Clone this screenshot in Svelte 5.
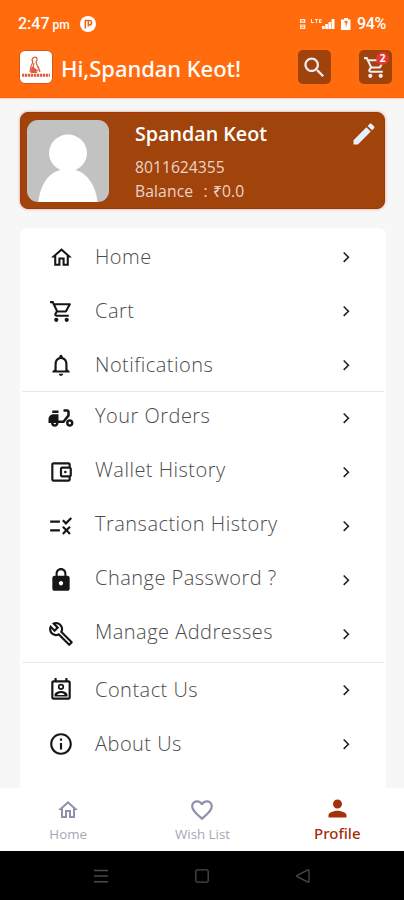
<script>
  const icons = {
    home: 'M12 5.69l5 4.5V18h-2v-6H9v6H7v-7.81l5-4.5M12 3L2 12h3v8h6v-6h2v6h6v-8h3L12 3z',
    cart: 'M15.55 13c.75 0 1.41-.41 1.75-1.03l3.58-6.49A.996.996 0 0 0 20.01 4H5.21l-.94-2H1v2h2l3.6 7.59-1.35 2.44C4.52 15.37 5.48 17 7 17h12v-2H7l1.1-2h7.45zM6.16 6h12.15l-2.76 5H8.53L6.16 6zM7 18c-1.1 0-1.99.9-1.99 2S5.9 22 7 22s2-.9 2-2-.9-2-2-2zm10 0c-1.1 0-1.99.9-1.99 2s.89 2 1.99 2 2-.9 2-2-.9-2-2-2z',
    bell: 'M12 22c1.1 0 2-.9 2-2h-4c0 1.1.9 2 2 2zm6-6v-5c0-3.07-1.63-5.64-4.5-6.32V4c0-.83-.67-1.5-1.5-1.5s-1.5.67-1.5 1.5v.68C7.64 5.36 6 7.92 6 11v5l-2 2v1h16v-1l-2-2zm-2 1H8v-6c0-2.48 1.51-4.5 4-4.5s4 2.02 4 4.5v6z',
    scooter: 'M19 7c0-1.1-.9-2-2-2h-3v2h3v2.65L13.52 14H10V9H6c-2.21 0-4 1.79-4 4v3h2c0 1.66 1.34 3 3 3s3-1.34 3-3h4.48L19 10.35V7zM7 17c-.55 0-1-.45-1-1h2c0 .55-.45 1-1 1zM5 6h5v2H5zM19 13c-1.66 0-3 1.34-3 3s1.34 3 3 3 3-1.34 3-3-1.34-3-3-3zm0 4c-.55 0-1-.45-1-1s.45-1 1-1 1 .45 1 1-.45 1-1 1z',
    wallet: 'M21 7.28V5c0-1.1-.9-2-2-2H5c-1.11 0-2 .9-2 2v14c0 1.1.89 2 2 2h14c1.1 0 2-.9 2-2v-2.28c.59-.35 1-.98 1-1.72V9c0-.74-.41-1.37-1-1.72zM20 9v6h-7V9h7zM5 19V5h14v2h-6c-1.1 0-2 .9-2 2v6c0 1.1.9 2 2 2h6v2H5zM16 10.8a1.2 1.2 0 1 0 0 2.4a1.2 1.2 0 1 0 0-2.4z',
    rule: 'M16.54 11L13 7.46l1.41-1.41 2.12 2.12 4.24-4.24 1.41 1.41L16.54 11zM11 7H2v2h9V7zm10 6.41L19.59 12 17 14.59 14.41 12 13 13.41 15.59 16 13 18.59 14.41 20 17 17.41 19.59 20 21 18.59 18.41 16 21 13.41zM11 15H2v2h9v-2z',
    lock: 'M18 8h-1V6c0-2.76-2.24-5-5-5S7 3.24 7 6v2H6c-1.1 0-2 .9-2 2v10c0 1.1.9 2 2 2h12c1.1 0 2-.9 2-2V10c0-1.1-.9-2-2-2zm-6 9c-1.1 0-2-.9-2-2s.9-2 2-2 2 .9 2 2-.9 2-2 2zm3.1-9H8.9V6c0-1.71 1.39-3.1 3.1-3.1 1.71 0 3.1 1.39 3.1 3.1v2z',
    wrench: 'M22.61 18.99l-9.08-9.08c.93-2.34.45-5.1-1.44-7C9.79.61 6.21.4 3.66 2.26L7.5 6.11 6.08 7.52 2.25 3.69C.39 6.23.6 9.82 2.9 12.11c1.86 1.86 4.57 2.35 6.89 1.48l9.11 9.11c.39.39 1.02.39 1.41 0l2.3-2.3c.4-.38.4-1.01 0-1.41zm-3 1.6l-9.46-9.46c-.61.45-1.29.72-2 .82-1.36.2-2.79-.21-3.83-1.25C3.37 9.76 2.93 8.5 3 7.26l3.09 3.09 4.24-4.24-3.09-3.09c1.24-.07 2.49.37 3.44 1.31 1.08 1.08 1.49 2.57 1.24 3.96-.12.71-.42 1.37-.88 1.96l9.45 9.45-.88.89z',
    contact: 'M19 3h-1V1h-2v2H8V1H6v2H5c-1.11 0-2 .9-2 2v14c0 1.1.89 2 2 2h14c1.1 0 2-.9 2-2V5c0-1.1-.9-2-2-2zm0 16H5V5h14v14zM12 6.2a2.9 2.9 0 1 0 0 5.8a2.9 2.9 0 1 0 0-5.8zm0 1.6a1.3 1.3 0 1 1 0 2.6a1.3 1.3 0 1 1 0-2.6zM6 16.6V18h12v-1.4c0-2.4-3.8-3.7-6-3.7s-6 1.3-6 3.7zm2.5-.1c.7-.9 2.2-1.7 3.5-1.7s2.8.8 3.5 1.7z',
    info: 'M11 7h2v2h-2V7zm0 4h2v6h-2v-6zm1-9C6.48 2 2 6.48 2 12s4.48 10 10 10 10-4.48 10-10S17.52 2 12 2zm0 18c-4.41 0-8-3.59-8-8s3.59-8 8-8 8 3.59 8 8-3.59 8-8 8z',
    heart: 'M16.5 3c-1.74 0-3.41.81-4.5 2.09C10.91 3.81 9.24 3 7.5 3 4.42 3 2 5.42 2 8.5c0 3.78 3.4 6.86 8.55 11.54L12 21.35l1.45-1.32C18.6 15.36 22 12.28 22 8.5 22 5.42 19.58 3 16.5 3zm-4.4 15.55l-.1.1-.1-.1C7.14 14.24 4 11.39 4 8.5 4 6.5 5.5 5 7.5 5c1.54 0 3.04.99 3.57 2.36h1.87C13.46 5.99 14.96 5 16.5 5c2 0 3.5 1.5 3.5 3.5 0 2.89-3.14 5.74-7.9 10.05z',
    person: 'M12 12c2.21 0 4-1.79 4-4s-1.79-4-4-4-4 1.79-4 4 1.79 4 4 4zm0 2c-2.67 0-8 1.34-8 4v2h16v-2c0-2.66-5.33-4-8-4z',
    search: 'M15.5 14h-.79l-.28-.27C15.41 12.59 16 11.11 16 9.5 16 5.91 13.09 3 9.5 3S3 5.91 3 9.5 5.91 16 9.5 16c1.61 0 3.09-.59 4.23-1.57l.27.28v.79l5 4.99L20.49 19l-4.99-5zm-6 0C7.01 14 5 11.99 5 9.5S7.01 5 9.5 5 14 7.01 14 9.5 11.99 14 9.5 14z',
    edit: 'M3 17.25V21h3.75L17.81 9.94l-3.75-3.75L3 17.25zM20.71 7.04c.39-.39.39-1.02 0-1.41l-2.34-2.34c-.39-.39-1.02-.39-1.41 0l-1.83 1.83 3.75 3.75 1.83-1.83z',
  };

  const groups = [
    { name: 'main', items: [
      { icon: 'home', label: 'Home', size: 25 },
      { icon: 'cart', label: 'Cart', size: 25 },
      { icon: 'bell', label: 'Notifications', size: 26 },
    ] },
    { name: 'account', items: [
      { icon: 'scooter', label: 'Your Orders', size: 30 },
      { icon: 'wallet', label: 'Wallet History', size: 26 },
      { icon: 'rule', label: 'Transaction History', size: 26 },
      { icon: 'lock', label: 'Change Password ?', size: 26 },
      { icon: 'wrench', label: 'Manage Addresses', size: 26 },
    ] },
    { name: 'support', items: [
      { icon: 'contact', label: 'Contact Us', size: 26 },
      { icon: 'info', label: 'About Us', size: 26 },
    ] },
  ];

  const tabs = [
    { icon: 'home', label: 'Home', size: 24 },
    { icon: 'heart', label: 'Wish List', size: 26 },
    { icon: 'person', label: 'Profile', size: 27, active: true },
  ];
</script>

{#snippet icon(name, size)}
  <svg viewBox="0 0 24 24" width={size} height={size} fill="currentColor" fill-rule="evenodd"><path d={icons[name]} /></svg>
{/snippet}

<div class="screen">
  <header>
    <div class="status">
      <span class="time">2:47 <small>pm</small></span>
      <svg class="notice" viewBox="0 0 16 16" width="16" height="16">
        <circle cx="8" cy="8" r="8" fill="#fff" />
        <path d="M5.300 12.500V4.500h2.500M8.300 8.800h1.200a2.100 2.100 0 0 0 0-4.300H8.300v6" fill="none" stroke="#f9610f" stroke-width="1.500" />
      </svg>
      <svg class="signals" viewBox="0 0 56 16" width="56" height="16" fill="#fff">
        <path d="M2 3h5v1.300H2zM2 5.600h5v1.200H2zM2 3h1.300v4H2zM6 3h1.300v4H6zM2 8.500h1.300V13H2zM6 8.500h1.300V13H6zM2 8.500h5v1H2zM2 12h5v1H2zM2 10.300h5v.9H2z" opacity=".85" />
        <path d="M13 3h1v3h2v1h-3zM17 3h3v1h-1v3h-1V4h-1zM21 3h2.500v1H22v.6h1.400v.8H22V6h1.500v1H21z" opacity=".85" />
        <path d="M24 10h2.700v3H24zM27.200 8h2.700v5h-2.700zM30.400 6h2.700v7h-2.700zM33.600 3H36.500V13h-2.900z" />
        <path fill-rule="evenodd" d="M46 2h4v1.500h2.500V14h-9.500V3.500h3zM46.500 4.700v2h1.200v4.800l1.800-4.800V4.700z" />
      </svg>
      <span class="percent">94%</span>
    </div>
    <div class="titlebar">
      <div class="logo">
        <svg viewBox="0 0 32 32" width="32" height="32" fill="none" stroke="#df5b3a">
          <path d="M12 10c0-5 6-5 5-1l-1 2 1 3 3 7M12 9c2 2 0 4-1 6l-1 6M14 12l-1 5 3 4M12 16l6 4M18 15l2 6" stroke-width="1.200" />
          <path d="M10.500 22l1-6 3 1 3 5z" fill="#df5b3a" stroke="none" />
          <path d="M2 24.300h28" stroke-width="3" stroke-dasharray="2.300 .7" />
        </svg>
      </div>
      <h1>Hi,Spandan Keot!</h1>
      <button class="tool search" aria-label="Search">{@render icon('search', 27)}</button>
      <button class="tool cart" aria-label="Cart">{@render icon('cart', 25)}<span class="badge">2</span></button>
    </div>
  </header>

  <section class="profile">
    <svg class="avatar" viewBox="0 0 82 82" width="82" height="82">
      <rect width="82" height="82" fill="#c2c2c2" />
      <ellipse cx="41" cy="33" rx="19" ry="18.500" fill="#fff" />
      <path d="M34 47h14v3c11 2 21 15 22.500 32h-59C13 65 22 52 34 50z" fill="#fff" />
    </svg>
    <div class="who">
      <h2>Spandan Keot</h2>
      <p>8011624355</p>
      <p class="balance">Balance&nbsp; : ₹0.0</p>
    </div>
    <span class="edit">{@render icon('edit', 28)}</span>
  </section>

  <main>
    {#each groups as group}
      <ul class={group.name}>
        {#each group.items as item}
          <li>
            <span class="glyph">{@render icon(item.icon, item.size)}</span>
            <span class="label">{item.label}</span>
            <svg class="chevron" viewBox="0 0 8 12" width="8" height="12"><path d="M1.700 1.500L6.400 6.200l-4.700 4.700" fill="none" stroke="#222" stroke-width="1.600" /></svg>
          </li>
        {/each}
      </ul>
    {/each}
  </main>

  <nav>
    {#each tabs as tab}
      <div class="tab" class:active={tab.active}>
        <span class="tabicon">{@render icon(tab.icon, tab.size)}</span>
        <span class="tabname">{tab.label}</span>
      </div>
    {/each}
  </nav>

  <footer>
    <svg viewBox="0 0 14 14" width="14" height="14"><path d="M0 1.500h14M0 7h14M0 12.700h14" stroke="#4a4a4a" stroke-width="1.600" /></svg>
    <svg viewBox="0 0 14 14" width="14" height="14"><rect x=".8" y=".8" width="12.400" height="12.400" rx="1.500" fill="none" stroke="#4a4a4a" stroke-width="1.300" /></svg>
    <svg viewBox="0 0 14 14" width="14" height="14"><path d="M12 .8L1.200 6.300q-1 .7 0 1.400L12 13.200q1 .2 1-.8V1.600q0-1-1-.8z" fill="none" stroke="#4a4a4a" stroke-width="1.300" /></svg>
  </footer>
</div>

<style>
  :global(body) { background: #f7f7f7; }
  .screen {
    width: 404px;
    height: 900px;
    overflow: hidden;
    display: flex;
    flex-direction: column;
    background: #f7f7f7;
    font-family: "Open Sans", "Noto Sans", sans-serif;
  }
  svg { display: block; }
  h1, h2, p, ul { margin: 0; padding: 0; }
  header {
    flex: none;
    height: 98px;
    box-sizing: border-box;
    background: #ff6b0d;
    border-bottom: 1px solid #fa6410;
    box-shadow: 0 1px 1px #ffd9c5;
    color: #fff;
  }
  .status {
    display: flex;
    align-items: center;
    height: 46px;
    padding: 1px 17px 0 18px;
    box-sizing: border-box;
    font-family: Roboto, sans-serif;
    font-weight: 500;
    font-size: 16px;
  }
  .time { width: 62px; white-space: nowrap; }
  .time small { font-size: 12px; margin-left: -1px; }
  .signals { margin-left: auto; margin-right: 3px; }
  .percent { width: 30px; font-size: 16px; letter-spacing: -.3px; }
  .titlebar { display: flex; align-items: center; padding: 4px 12px 0 19px; }
  .logo { width: 34px; height: 34px; box-sizing: border-box; border: 1px solid #d9571b; border-radius: 6px; background: #fff; overflow: hidden; }
  h1 { width: 237px; margin: 2px 0 0 8px; white-space: nowrap; font: 500 22px/32px "Noto Sans", "Open Sans", sans-serif; letter-spacing: -.05px; }
  .tool {
    position: relative;
    width: 33px;
    height: 34px;
    padding: 0;
    border: 0;
    border-radius: 5px;
    background: #9f430b;
    color: #f3eaf4;
    display: grid;
    place-items: center;
    flex: none;
  }
  .tool.cart { margin-left: 28px; }
  .badge {
    position: absolute;
    top: 2px;
    right: 3px;
    width: 13px;
    height: 13px;
    border-radius: 50%;
    background: #e43732;
    color: #fff;
    text-align: center;
    font: 700 10px/13px "Open Sans", sans-serif;
  }
  .profile {
    flex: none;
    display: flex;
    height: 97px;
    margin: 14px 19px 0 20px;
    padding: 8px 7px 0 7px;
    box-sizing: border-box;
    border-radius: 8px;
    border: 1px solid #aa3605;
    background: #a0440b;
    box-shadow: 0 0 3px #c9967c;
    color: #fff;
  }
  .avatar { border-radius: 11px; flex: none; margin-left: -1px; margin-top: -1px; }
  .who { margin-left: 26px; white-space: nowrap; }
  h2 { font-size: 19.700px; line-height: 26px; font-weight: 600; }
  p { margin-top: 9px; font-size: 15.700px; line-height: 22px; color: #ecd3ca; }
  p.balance { margin-top: 2px; word-spacing: 1px; letter-spacing: .1px; }
  .edit { margin-left: auto; margin-right: -1px; margin-top: -1px; color: #e6effd; }
  main {
    flex: none;
    width: 366px;
    height: 560px;
    margin: 19px 0 0 20px;
    padding-top: 2px;
    box-sizing: border-box;
    border-radius: 8px 8px 0 0;
    background: #fff;
  }
  ul { list-style: none; margin: 0 2px; }
  .main { border-bottom: 1px solid #e9e9e9; height: 161px; }
  .account { border-bottom: 1px solid #e9e9e9; height: 271px; }
  li { display: flex; align-items: center; height: 54px; }
  .glyph { width: 34px; margin-left: 22px; display: grid; place-items: center; color: #161616; }
  .label { flex: 1; margin-left: 17px; font-size: 20px; line-height: 28px; font-weight: 300; letter-spacing: .48px; color: #4c4c4c; padding-bottom: 1px; }
  .account { margin-top: -1px; }
  .account .label { padding-bottom: 4px; }
  .chevron { margin-right: 34px; }
  nav { flex: none; display: flex; height: 63px; background: #fff; padding-left: 1px; }
  .tab { flex: 1; display: flex; flex-direction: column; align-items: center; color: #8e92ab; }
  .tabicon { height: 27px; margin-top: 8px; display: grid; place-items: center; }
  .tabname { margin-top: 1px; font-size: 13.300px; line-height: 20px; color: #a5a7b5; }
  .active, .active .tabname { color: #a42f0b; }
  .active .tabicon { height: 25px; margin-top: 7px; margin-left: 1px; }
  .active .tabname { margin-top: 3px; margin-left: 1px; font: 500 15px/20px "Noto Sans", "Open Sans", sans-serif; }
  footer { flex: 1; display: flex; align-items: center; justify-content: center; gap: 87px; background: #000; }
</style>
